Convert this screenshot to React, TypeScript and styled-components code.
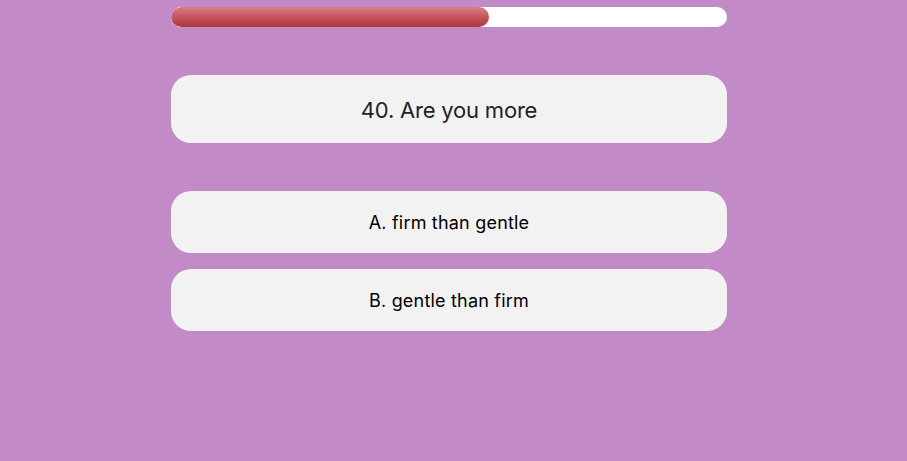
import React from "react";
import styled, { createGlobalStyle } from "styled-components";

const Global = createGlobalStyle`
  html, body { margin: 0; padding: 0; background: #c28ac6; }
  body { font-family: Inter, "Noto Sans", "Liberation Sans", sans-serif; min-height: 461px; }
`;

const Page = styled.div`
  width: 556px;
  margin-left: 171px;
  padding-top: 7px;
  display: flex;
  flex-direction: column;
`;

const Track = styled.div`
  height: 20px;
  border-radius: 10px;
  background: #ffffff;
  overflow: hidden;
`;

const Fill = styled.div`
  height: 100%;
  border-radius: 10px;
  background: linear-gradient(to bottom, #da7e84 0%, #c4545b 50%, #ad363d 100%);
`;

const QuestionCard = styled.div`
  margin-top: 48px;
  height: 68px;
  border-radius: 20px;
  background: #f2f2f2;
  display: flex;
  align-items: center;
  justify-content: center;
  font-size: 22px;
  color: #222222;
  letter-spacing: -0.2px;
  padding-top: 1px;
  box-sizing: border-box;
`;

const Options = styled.div`
  margin-top: 48px;
  display: flex;
  flex-direction: column;
  gap: 16px;
`;

const Option = styled.button`
  height: 62px;
  border: none;
  border-radius: 20px;
  background: #f2f2f2;
  font-family: inherit;
  font-size: 18px;
  color: #000000;
  display: flex;
  align-items: center;
  justify-content: center;
  cursor: pointer;
  padding: 0;
  letter-spacing: 0.2px;
`;

export default function App() {
  const current = 40;
  const total = 70;
  return (
    <>
      <Global />
      <Page>
        <Track>
          <Fill style={{ width: `${(current / total) * 100}%` }} />
        </Track>
        <QuestionCard>40. Are you more</QuestionCard>
        <Options>
          <Option>A. firm than gentle</Option>
          <Option>B. gentle than firm</Option>
        </Options>
      </Page>
    </>
  );
}
